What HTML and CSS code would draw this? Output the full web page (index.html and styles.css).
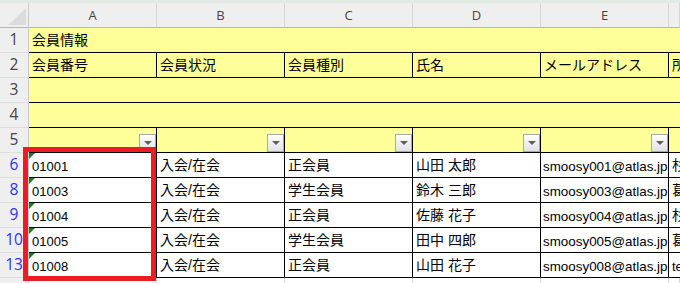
FILE: index.html
```html
<!DOCTYPE html>
<html lang="ja">

<head>
	<meta charset="UTF-8">
	<title>会員情報</title>
	<link rel="stylesheet" href="styles.css">
</head>

<body>
	<div class="sheet">
		<div class="topbar"></div>

		<!-- 列見出し -->
		<div class="row head">
			<div class="corner">
				<svg width="18" height="17" viewBox="0 0 18 17"><polygon points="18,0 18,17 0,17" fill="#dcdcdc"/></svg>
			</div>
			<div class="col">A</div>
			<div class="col">B</div>
			<div class="col">C</div>
			<div class="col">D</div>
			<div class="col">E</div>
			<div class="col"></div>
		</div>

		<div class="row yellow">
			<div class="rh">1</div>
			<div class="cell">会員情報</div>
			<div class="cell"></div>
			<div class="cell"></div>
			<div class="cell"></div>
			<div class="cell"></div>
			<div class="cell"></div>
		</div>
		<div class="row yellow lined">
			<div class="rh">2</div>
			<div class="cell">会員番号</div>
			<div class="cell">会員状況</div>
			<div class="cell">会員種別</div>
			<div class="cell">氏名</div>
			<div class="cell">メールアドレス</div>
			<div class="cell">所在地</div>
		</div>
		<div class="row yellow">
			<div class="rh">3</div>
			<div class="cell"></div>
			<div class="cell"></div>
			<div class="cell"></div>
			<div class="cell"></div>
			<div class="cell"></div>
			<div class="cell"></div>
		</div>
		<div class="row yellow">
			<div class="rh">4</div>
			<div class="cell"></div>
			<div class="cell"></div>
			<div class="cell"></div>
			<div class="cell"></div>
			<div class="cell"></div>
			<div class="cell"></div>
		</div>
		<div class="row yellow lined filter">
			<div class="rh">5</div>
			<div class="cell"><span class="dd"></span></div>
			<div class="cell"><span class="dd"></span></div>
			<div class="cell"><span class="dd"></span></div>
			<div class="cell"><span class="dd"></span></div>
			<div class="cell"><span class="dd"></span></div>
			<div class="cell"></div>
		</div>

		<!-- データ行 -->
		<div class="row lined">
			<div class="rh hit">6</div>
			<div class="cell num flag">01001</div>
			<div class="cell">入会/在会</div>
			<div class="cell">正会員</div>
			<div class="cell">山田 太郎</div>
			<div class="cell mail">smoosy001@atlas.jp</div>
			<div class="cell">杉並区</div>
		</div>
		<div class="row lined">
			<div class="rh hit">8</div>
			<div class="cell num flag">01003</div>
			<div class="cell">入会/在会</div>
			<div class="cell">学生会員</div>
			<div class="cell">鈴木 三郎</div>
			<div class="cell mail">smoosy003@atlas.jp</div>
			<div class="cell">葛飾区</div>
		</div>
		<div class="row lined">
			<div class="rh hit">9</div>
			<div class="cell num flag">01004</div>
			<div class="cell">入会/在会</div>
			<div class="cell">正会員</div>
			<div class="cell">佐藤 花子</div>
			<div class="cell mail">smoosy004@atlas.jp</div>
			<div class="cell">杉並区</div>
		</div>
		<div class="row lined">
			<div class="rh hit">10</div>
			<div class="cell num flag">01005</div>
			<div class="cell">入会/在会</div>
			<div class="cell">学生会員</div>
			<div class="cell">田中 四郎</div>
			<div class="cell mail">smoosy005@atlas.jp</div>
			<div class="cell">葛飾区</div>
		</div>
		<div class="row lined">
			<div class="rh hit">13</div>
			<div class="cell num flag">01008</div>
			<div class="cell">入会/在会</div>
			<div class="cell">正会員</div>
			<div class="cell">山田 花子</div>
			<div class="cell mail">smoosy008@atlas.jp</div>
			<div class="cell num">test</div>
		</div>
		<div class="row rest">
			<div class="rh"></div>
			<div class="cell"></div>
			<div class="cell"></div>
			<div class="cell"></div>
			<div class="cell"></div>
			<div class="cell"></div>
			<div class="cell"></div>
		</div>

		<!-- 赤枠 -->
		<div class="mark"></div>
	</div>
</body>

</html>
```

FILE: styles.css
```css
* {
	margin: 0;
	padding: 0;
	box-sizing: border-box;
}

body {
	width: 680px;
	height: 283px;
	overflow: hidden;
	background: #fff;
	font-family: "Liberation Sans", "Noto Sans CJK JP", sans-serif;
	color: #000;
}

.sheet {
	position: relative;
	width: 680px;
	height: 283px;
	overflow: hidden;
}

.topbar {
	height: 3px;
	background: #e3eae3;
}

.row {
	display: grid;
	grid-template-columns: 29px repeat(5, 128px) 11px;
	height: 25px;
}

/* 列見出し */
.corner {
	display: flex;
	align-items: flex-end;
	justify-content: flex-end;
	padding: 0 2px 2px 0;
	background: #efefef;
	border-right: 1px solid #c9c9c9;
	border-bottom: 1px solid #b5b5b5;
}

.col {
	font-family: "Open Sans", sans-serif;
	font-size: 13px;
	line-height: 24px;
	text-align: center;
	color: #444;
	background: #efefef;
	border-right: 1px solid #d6d6d6;
	border-bottom: 1px solid #b5b5b5;
}

/* 行見出し */
.rh {
	font-family: "Open Sans", sans-serif;
	font-size: 15.5px;
	line-height: 23px;
	text-align: center;
	color: #444;
	background: #efefef;
	border-right: 1px solid #c9c9c9;
	border-bottom: 1px solid #dcdcdc;
}

.rh.hit {
	color: #2f2fff;
}

/* セル */
.cell {
	display: flex;
	align-items: flex-end;
	padding: 0 3px 4px;
	font-size: 14px;
	line-height: 15px;
	white-space: nowrap;
	overflow: hidden;
	border-bottom: 1px solid #000;
}

.yellow .cell {
	background: #ffff99;
}

.lined .cell {
	border-right: 1px solid #000;
}

.lined .cell:last-child {
	border-right: none;
}

.num {
	font-size: 13px;
	padding-bottom: 3px;
}

.mail {
	font-size: 13.4px;
	padding: 0 0 3px 2px;
}

.flag {
	position: relative;
}

.flag::before {
	content: "";
	position: absolute;
	top: 0;
	left: 0;
	border-top: 6px solid #1d7a1d;
	border-right: 6px solid transparent;
}

/* フィルターボタン */
.filter .cell {
	justify-content: flex-end;
	padding: 0;
}

.dd {
	display: flex;
	align-items: center;
	justify-content: center;
	width: 17px;
	height: 18px;
	border: 1px solid #a8a8a8;
	background: linear-gradient(#fdfdfd, #e2e2e2);
}

.dd::after {
	content: "";
	border-top: 4px solid #5f5f5f;
	border-left: 4px solid transparent;
	border-right: 4px solid transparent;
}

.rest .cell {
	border-right: 1px solid #d9d9d9;
	border-bottom: none;
}

.mark {
	position: absolute;
	left: 23px;
	top: 147px;
	width: 133px;
	height: 134px;
	border: 5px solid #ec1c24;
}
```
